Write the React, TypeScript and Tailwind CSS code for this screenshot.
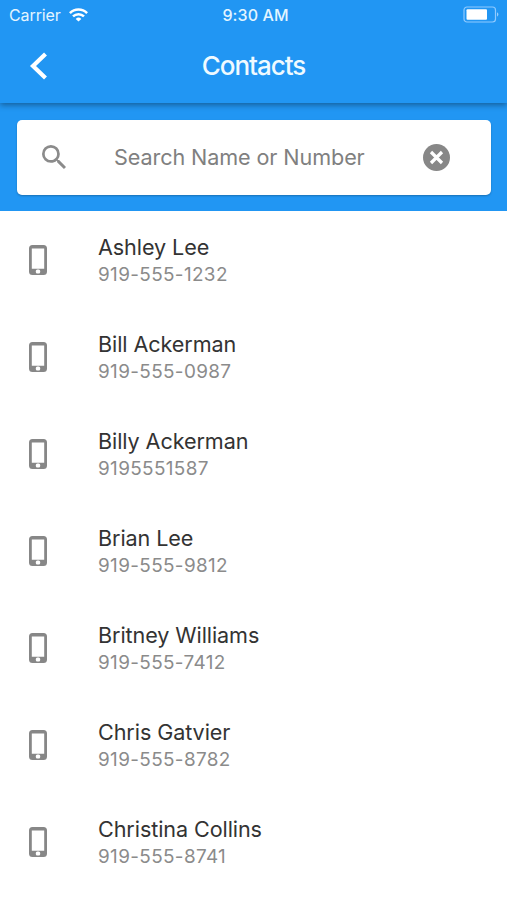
const contacts = [
  { name: 'Ashley Lee', phone: '919-555-1232' },
  { name: 'Bill Ackerman', phone: '919-555-0987' },
  { name: 'Billy Ackerman', phone: '9195551587' },
  { name: 'Brian Lee', phone: '919-555-9812' },
  { name: 'Britney Williams', phone: '919-555-7412' },
  { name: 'Chris Gatvier', phone: '919-555-8782' },
  { name: 'Christina Collins', phone: '919-555-8741' },
];

function PhoneIcon() {
  return (
    <svg className="ml-[29px] h-[30px] w-[18px] shrink-0" viewBox="0 0 18 30">
      <path
        fill="#878787"
        fillRule="evenodd"
        d="M3.500 0h11A3.500 3.500 0 0 1 18 3.500v23a3.500 3.500 0 0 1-3.500 3.500h-11A3.500 3.500 0 0 1 0 26.500v-23A3.500 3.500 0 0 1 3.500 0zM2.800 3.500v20.300h12.400V3.500z"
      />
      <rect x="6.800" y="24.600" width="4.400" height="4" rx="1.500" fill="#fff" />
    </svg>
  );
}

function StatusBar() {
  return (
    <div className="grid h-[30px] grid-cols-3 items-center text-[16px] leading-[30px] text-[#e3f5ff]">
      <div className="flex items-center gap-[8px] pl-[9px]">
        <span className="tracking-[-0.1px]">Carrier</span>
        <svg className="-mt-px h-[14px] w-[19px]" viewBox="0 0 19 14" fill="none" stroke="#fff" strokeWidth="2.5">
          <path d="M.9 5.100a12.300 12.300 0 0 1 17.200 0" />
          <path d="M4 8.400a7.900 7.900 0 0 1 11 0" />
          <path d="M9.500 13.600 6.700 10.900a4 4 0 0 1 5.600 0z" fill="#fff" stroke="none" />
        </svg>
      </div>
      <div className="pl-1 text-center font-medium tracking-[0.1px]">9:30 AM</div>
      <div className="flex justify-end pr-[7px]">
        <svg className="-mt-px h-[17px] w-[37px]" viewBox="0 0 37 17">
          <rect x="1" y="1" width="31.500" height="15" rx="3" fill="none" stroke="#8fcaff" strokeWidth="1.200" />
          <rect x="3.500" y="3.200" width="20.500" height="10.600" rx="1" fill="#fff" />
          <path d="M34.200 6.300q2.300 2.200 0 4.400z" fill="#b5dcff" />
        </svg>
      </div>
    </div>
  );
}

export default function App() {
  return (
    <div className="h-[900px] w-[507px] overflow-hidden bg-white font-['Inter','Liberation_Sans',sans-serif]">
      <header className="relative h-[103px] bg-[#2196f3] shadow-[0_2px_6px_rgba(0,0,0,0.38)]">
        <StatusBar />
        <div className="grid h-[72px] grid-cols-3 items-center">
          <svg className="ml-[29px] h-[28px] w-[20px]" viewBox="0 0 20 28" fill="none" stroke="#fff" strokeWidth="4.200">
            <path d="M16.500 2 4 14l12.500 12" />
          </svg>
          <h1 className="text-center text-[26px] font-medium leading-[32px] tracking-[-1.05px] text-[#effaff]">Contacts</h1>
        </div>
      </header>

      <div className="h-[108px] bg-[#2196f3] px-[16.500px] pt-[16.500px]">
        <div className="flex h-[75px] items-center rounded-[5px] bg-white shadow-[0_1px_2px_rgba(0,0,0,0.25)]">
          <svg className="ml-[25px] h-[24px] w-[24px] shrink-0" viewBox="3 3 17.490 17.490" fill="#8b8b8b">
            <path d="M15.500 14h-.79l-.28-.27A6.471 6.471 0 0 0 16 9.500 6.500 6.500 0 1 0 9.500 16c1.610 0 3.090-.59 4.230-1.570l.27.28v.79l5 4.990L20.490 19l-4.990-5zm-6 0C7.010 14 5 11.990 5 9.500S7.010 5 9.500 5 14 7.010 14 9.500 11.990 14 9.500 14z" />
          </svg>
          <span className="grow whitespace-nowrap pl-[48.500px] text-[21.6px] leading-[27px] tracking-[-0.1px] text-[#808080]">
            Search Name or Number
          </span>
          <svg className="mr-[41px] h-[27px] w-[27px] shrink-0" viewBox="0 0 27 27">
            <circle cx="13.500" cy="13.500" r="13.500" fill="#878787" />
            <path d="m8 8 11 11M19 8 8 19" stroke="#fff" strokeWidth="3.200" />
          </svg>
        </div>
      </div>

      <ul>
        {contacts.map((contact) => (
          <li key={contact.name} className="flex h-[97.1px] items-center">
            <PhoneIcon />
            <div className="ml-[51px] whitespace-nowrap pt-[2px]">
              <p className="text-[21.6px] leading-[27px] tracking-[-0.09px] text-[#333333]">{contact.name}</p>
              <p className="text-[18.9px] leading-[27px] tracking-[0.37px] text-[#8b8b8b]">{contact.phone}</p>
            </div>
          </li>
        ))}
      </ul>
    </div>
  );
}
